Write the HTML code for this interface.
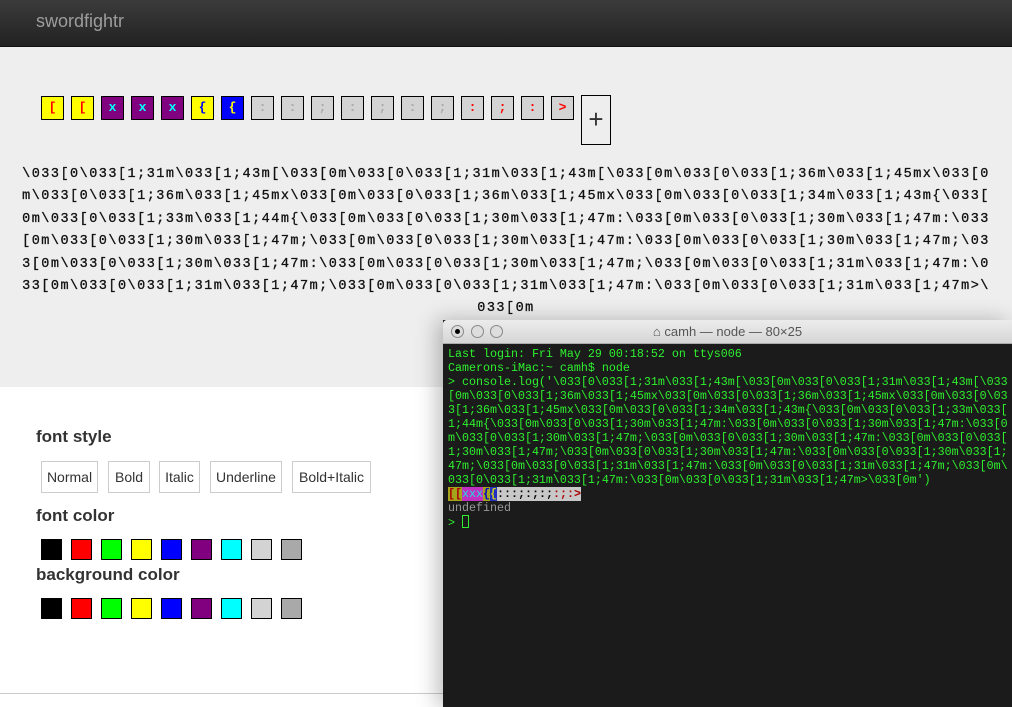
<!DOCTYPE html>
<html><head><meta charset="utf-8"><style>
*{margin:0;padding:0;box-sizing:border-box}
body{width:1012px;height:707px;overflow:hidden;background:#fff;font-family:"Liberation Sans",sans-serif;position:relative}
.hdr{position:absolute;left:0;top:0;width:1012px;height:47px;background:linear-gradient(#3b3b3b,#222);border-bottom:1px solid #111}
.hdr span{position:absolute;left:36px;top:11px;font-size:18px;color:#9d9d9d}
.gray{position:absolute;left:0;top:47px;width:1012px;height:340px;background:#eee}
.cell{position:absolute;top:96px;width:23px;height:24px;border:1px solid #000;font-family:"Liberation Mono",monospace;font-weight:bold;font-size:13px;text-align:center;line-height:22px}
.plus{position:absolute;left:581px;top:95px;width:30px;height:50px;border:1px solid #000;font-size:26px;text-align:center;line-height:46px;color:#333}
.code{position:absolute;left:0;top:164px;width:1012px;font-family:"Liberation Mono",monospace;font-size:13.5px;color:#111;line-height:22.4px;-webkit-text-stroke:0.3px #111}
.code div{white-space:pre;width:1012px;text-align:center;letter-spacing:1.48px}
.h{position:absolute;left:36px;font-size:17px;font-weight:bold;color:#333}
.btn{position:absolute;top:461px;height:32px;border:1px solid #ccc;background:#fff;font-size:14px;color:#333;line-height:30px;text-align:center}
.sw{position:absolute;width:21px;height:21px;border:1px solid #000}
.line{position:absolute;left:0;top:693px;width:443px;height:1px;background:#ccc}
.term{position:absolute;left:443px;top:320px;width:569px;height:387px;background:#1b1b1b;box-shadow:-6px 0 20px rgba(0,0,0,.25)}
.tb{height:24px;background:linear-gradient(#ececec,#d6d6d6);border-bottom:1px solid #aaa;position:relative;border-radius:4px 0 0 0}
.tb .c{position:absolute;top:5px;width:13px;height:13px;border-radius:50%;border:1px solid #888;background:#ddd}
.tb .t{position:absolute;left:0;width:569px;top:4px;text-align:center;font-size:13px;color:#555}
.tt{position:absolute;left:5px;top:27px;font-family:"Liberation Mono",monospace;font-size:11.67px;line-height:14px;color:#2ef02e;white-space:pre}
</style></head><body>
<div class="hdr"><span>swordfightr</span></div>
<div class="gray"></div>
<div class="cell" style="left:41px;background:#ff0;color:#f00">[</div>
<div class="cell" style="left:71px;background:#ff0;color:#f00">[</div>
<div class="cell" style="left:101px;background:#800080;color:#0ff">x</div>
<div class="cell" style="left:131px;background:#800080;color:#0ff">x</div>
<div class="cell" style="left:161px;background:#800080;color:#0ff">x</div>
<div class="cell" style="left:191px;background:#ff0;color:#00f">{</div>
<div class="cell" style="left:221px;background:#00f;color:#ff0">{</div>
<div class="cell" style="left:251px;background:#d3d3d3;color:#aaa">:</div>
<div class="cell" style="left:281px;background:#d3d3d3;color:#aaa">:</div>
<div class="cell" style="left:311px;background:#d3d3d3;color:#aaa">;</div>
<div class="cell" style="left:341px;background:#d3d3d3;color:#aaa">:</div>
<div class="cell" style="left:371px;background:#d3d3d3;color:#aaa">;</div>
<div class="cell" style="left:401px;background:#d3d3d3;color:#aaa">:</div>
<div class="cell" style="left:431px;background:#d3d3d3;color:#aaa">;</div>
<div class="cell" style="left:461px;background:#d3d3d3;color:#f00">:</div>
<div class="cell" style="left:491px;background:#d3d3d3;color:#f00">;</div>
<div class="cell" style="left:521px;background:#d3d3d3;color:#f00">:</div>
<div class="cell" style="left:551px;background:#d3d3d3;color:#f00">&gt;</div>
<div class="plus">+</div>
<div class="code">
<div>\033[0\033[1;31m\033[1;43m[\033[0m\033[0\033[1;31m\033[1;43m[\033[0m\033[0\033[1;36m\033[1;45mx\033[0</div>
<div>m\033[0\033[1;36m\033[1;45mx\033[0m\033[0\033[1;36m\033[1;45mx\033[0m\033[0\033[1;34m\033[1;43m{\033[</div>
<div>0m\033[0\033[1;33m\033[1;44m{\033[0m\033[0\033[1;30m\033[1;47m:\033[0m\033[0\033[1;30m\033[1;47m:\033</div>
<div>[0m\033[0\033[1;30m\033[1;47m;\033[0m\033[0\033[1;30m\033[1;47m:\033[0m\033[0\033[1;30m\033[1;47m;\03</div>
<div>3[0m\033[0\033[1;30m\033[1;47m:\033[0m\033[0\033[1;30m\033[1;47m;\033[0m\033[0\033[1;31m\033[1;47m:\0</div>
<div>33[0m\033[0\033[1;31m\033[1;47m;\033[0m\033[0\033[1;31m\033[1;47m:\033[0m\033[0\033[1;31m\033[1;47m&gt;\</div>
<div>033[0m</div>
</div>
<div class="h" style="top:427px">font style</div>
<div class="btn" style="left:41px;width:57px">Normal</div>
<div class="btn" style="left:108px;width:42px">Bold</div>
<div class="btn" style="left:159px;width:41px">Italic</div>
<div class="btn" style="left:210px;width:72px">Underline</div>
<div class="btn" style="left:292px;width:79px">Bold+Italic</div>
<div class="h" style="top:506px">font color</div>
<div class="h" style="top:565px">background color</div>
<div class="sw" style="left:41px;top:539px;background:#000"></div><div class="sw" style="left:71px;top:539px;background:#f00"></div><div class="sw" style="left:101px;top:539px;background:#0f0"></div><div class="sw" style="left:131px;top:539px;background:#ff0"></div><div class="sw" style="left:161px;top:539px;background:#00f"></div><div class="sw" style="left:191px;top:539px;background:#800080"></div><div class="sw" style="left:221px;top:539px;background:#0ff"></div><div class="sw" style="left:251px;top:539px;background:#d3d3d3"></div><div class="sw" style="left:281px;top:539px;background:#a9a9a9"></div>
<div class="sw" style="left:41px;top:598px;background:#000"></div><div class="sw" style="left:71px;top:598px;background:#f00"></div><div class="sw" style="left:101px;top:598px;background:#0f0"></div><div class="sw" style="left:131px;top:598px;background:#ff0"></div><div class="sw" style="left:161px;top:598px;background:#00f"></div><div class="sw" style="left:191px;top:598px;background:#800080"></div><div class="sw" style="left:221px;top:598px;background:#0ff"></div><div class="sw" style="left:251px;top:598px;background:#d3d3d3"></div><div class="sw" style="left:281px;top:598px;background:#a9a9a9"></div>
<div class="line"></div>
<div class="term">
<div class="tb">
<div class="c" style="left:8px"><div style="width:5px;height:5px;border-radius:50%;background:#000;margin:3px"></div></div>
<div class="c" style="left:28px"></div><div class="c" style="left:47px"></div>
<div class="t">⌂ camh — node — 80×25</div>
</div>
<div class="tt">Last login: Fri May 29 00:18:52 on ttys006
Camerons-iMac:~ camh$ node
&gt; console.log('\033[0\033[1;31m\033[1;43m[\033[0m\033[0\033[1;31m\033[1;43m[\033
[0m\033[0\033[1;36m\033[1;45mx\033[0m\033[0\033[1;36m\033[1;45mx\033[0m\033[0\03
3[1;36m\033[1;45mx\033[0m\033[0\033[1;34m\033[1;43m{\033[0m\033[0\033[1;33m\033[
1;44m{\033[0m\033[0\033[1;30m\033[1;47m:\033[0m\033[0\033[1;30m\033[1;47m:\033[0
m\033[0\033[1;30m\033[1;47m;\033[0m\033[0\033[1;30m\033[1;47m:\033[0m\033[0\033[
1;30m\033[1;47m;\033[0m\033[0\033[1;30m\033[1;47m:\033[0m\033[0\033[1;30m\033[1;
47m;\033[0m\033[0\033[1;31m\033[1;47m:\033[0m\033[0\033[1;31m\033[1;47m;\033[0m\
033[0\033[1;31m\033[1;47m:\033[0m\033[0\033[1;31m\033[1;47m&gt;\033[0m')
<span style="background:#a5a51c;color:#a00;font-weight:bold">[[</span><span style="background:#c030c0;color:#2dd">xxx</span><span style="background:#a5a51c;color:#00c;font-weight:bold">{</span><span style="background:#2030c0;color:#cc2;font-weight:bold">{</span><span style="background:#c8c8c8;color:#000;font-weight:bold">:::;:;:;</span><span style="background:#c8c8c8;color:#a00;font-weight:bold">:;:&gt;</span>
<span style="color:#999">undefined</span>
&gt; <span style="display:inline-block;width:7px;height:13px;border:1px solid #2ef02e;vertical-align:-2px"></span></div>
</div>
</body></html>
